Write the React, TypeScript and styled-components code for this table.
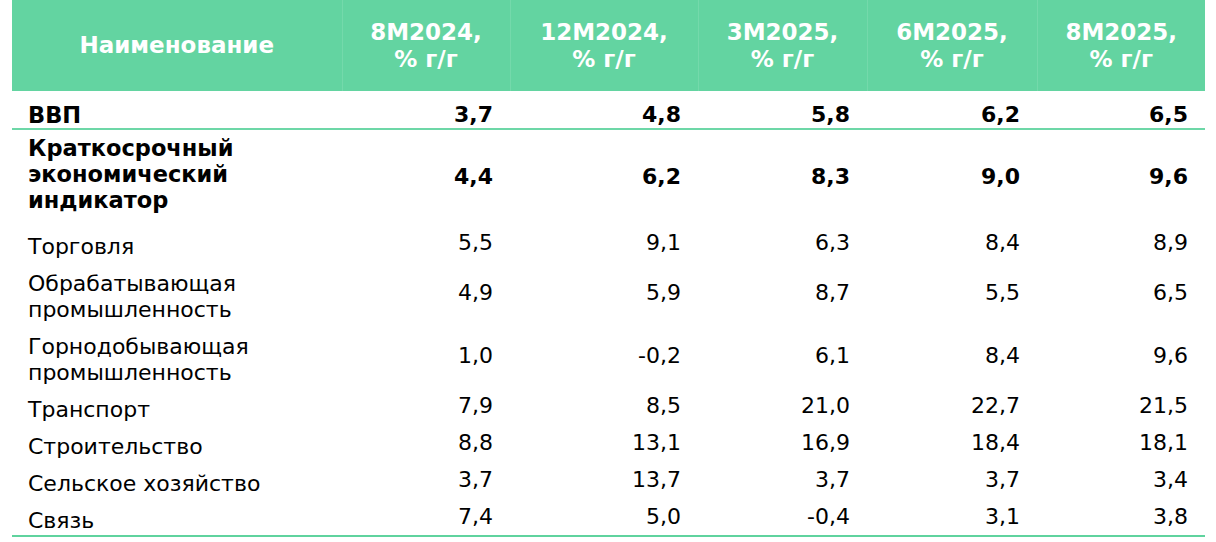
import styled, { createGlobalStyle } from "styled-components";

const GlobalStyle = createGlobalStyle`
  html, body {
    margin: 0;
    padding: 0;
    background: #ffffff;
  }
  body {
    font-family: "DejaVu Sans", Verdana, sans-serif;
  }
`;

const Page = styled.div`
  width: 1216px;
  height: 542px;
  overflow: hidden;
  padding-left: 12px;
  box-sizing: border-box;
`;

const Table = styled.table`
  width: 1193px;
  border-collapse: collapse;
  table-layout: fixed;
  font-size: 22px;
  color: #000;
`;

const Col = styled.col<{ $w: number }>`
  width: ${(p) => p.$w}px;
`;

const HeadRow = styled.tr`
  height: 91px;
  background: #63d4a1;
`;

const HeadCell = styled.th`
  color: #ffffff;
  font-size: 23px;
  font-weight: bold;
  line-height: 27px;
  text-align: center;
  vertical-align: middle;
  padding: 0 6px;
  border-right: 1px solid #74d9ab;
  &:last-child {
    border-right: none;
  }
`;

const Row = styled.tr<{ $first?: boolean; $last?: boolean }>`
  border-bottom: ${(p) =>
    p.$first ? "2px solid #6dd7a7" : p.$last ? "2px solid #5fd39e" : "none"};
`;

const Label = styled.td<{ $bold?: boolean; $top: number; $bottom: number }>`
  font-weight: ${(p) => (p.$bold ? "bold" : "normal")};
  font-size: ${(p) => (p.$bold ? "22.5px" : "22px")};
  line-height: 26px;
  padding: ${(p) => `${p.$top}px 8px ${p.$bottom}px 16px`};
  vertical-align: top;
  text-align: left;
`;

const Line = styled.div`
  white-space: nowrap;
`;

const Value = styled.td<{ $bold?: boolean; $align: string; $top: number }>`
  font-weight: ${(p) => (p.$bold ? "bold" : "normal")};
  line-height: 26px;
  padding: ${(p) => `${p.$top}px 17px 0 0`};
  vertical-align: ${(p) => p.$align};
  text-align: right;
`;

const widths = [330, 168, 188, 169, 170, 168];
const heads = ["8M2024,", "12M2024,", "3M2025,", "6M2025,", "8M2025,"];

type Item = {
  name: string[];
  values: string[];
  bold?: boolean;
  top: number;
  bottom: number;
  align?: string;
};

const rows: Item[] = [
  { name: ["ВВП"], values: ["3,7", "4,8", "5,8", "6,2", "6,5"], bold: true, top: 11, bottom: 0, align: "top" },
  {
    name: ["Краткосрочный", "экономический", "индикатор"],
    values: ["4,4", "6,2", "8,3", "9,0", "9,6"],
    bold: true,
    top: 5,
    bottom: 11,
  },
  { name: ["Торговля"], values: ["5,5", "9,1", "6,3", "8,4", "8,9"], top: 10, bottom: 1 },
  { name: ["Обрабатывающая", "промышленность"], values: ["4,9", "5,9", "8,7", "5,5", "6,5"], top: 10, bottom: 1 },
  { name: ["Горнодобывающая", "промышленность"], values: ["1,0", "-0,2", "6,1", "8,4", "9,6"], top: 10, bottom: 1 },
  { name: ["Транспорт"], values: ["7,9", "8,5", "21,0", "22,7", "21,5"], top: 10, bottom: 1 },
  { name: ["Строительство"], values: ["8,8", "13,1", "16,9", "18,4", "18,1"], top: 10, bottom: 1 },
  { name: ["Сельское хозяйство"], values: ["3,7", "13,7", "3,7", "3,7", "3,4"], top: 10, bottom: 1 },
  { name: ["Связь"], values: ["7,4", "5,0", "-0,4", "3,1", "3,8"], top: 10, bottom: 1 },
];

export default function App() {
  return (
    <>
      <GlobalStyle />
      <Page>
        <Table>
          <colgroup>
            {widths.map((w, i) => (
              <Col key={i} $w={w} />
            ))}
          </colgroup>
          <thead>
            <HeadRow>
              <HeadCell>Наименование</HeadCell>
              {heads.map((h) => (
                <HeadCell key={h}>
                  {h}
                  <br />% г/г
                </HeadCell>
              ))}
            </HeadRow>
          </thead>
          <tbody>
            {rows.map((r, i) => (
              <Row key={i} $first={i === 0} $last={i === rows.length - 1}>
                <Label $bold={r.bold} $top={r.top} $bottom={r.bottom}>
                  {r.name.map((n, k) => (
                    <Line key={k}>{n}</Line>
                  ))}
                </Label>
                {r.values.map((v, k) => (
                  <Value
                    key={k}
                    $bold={r.bold}
                    $align={r.align ?? "middle"}
                    $top={r.align === "top" ? r.top : 0}
                  >
                    {v}
                  </Value>
                ))}
              </Row>
            ))}
          </tbody>
        </Table>
      </Page>
    </>
  );
}
